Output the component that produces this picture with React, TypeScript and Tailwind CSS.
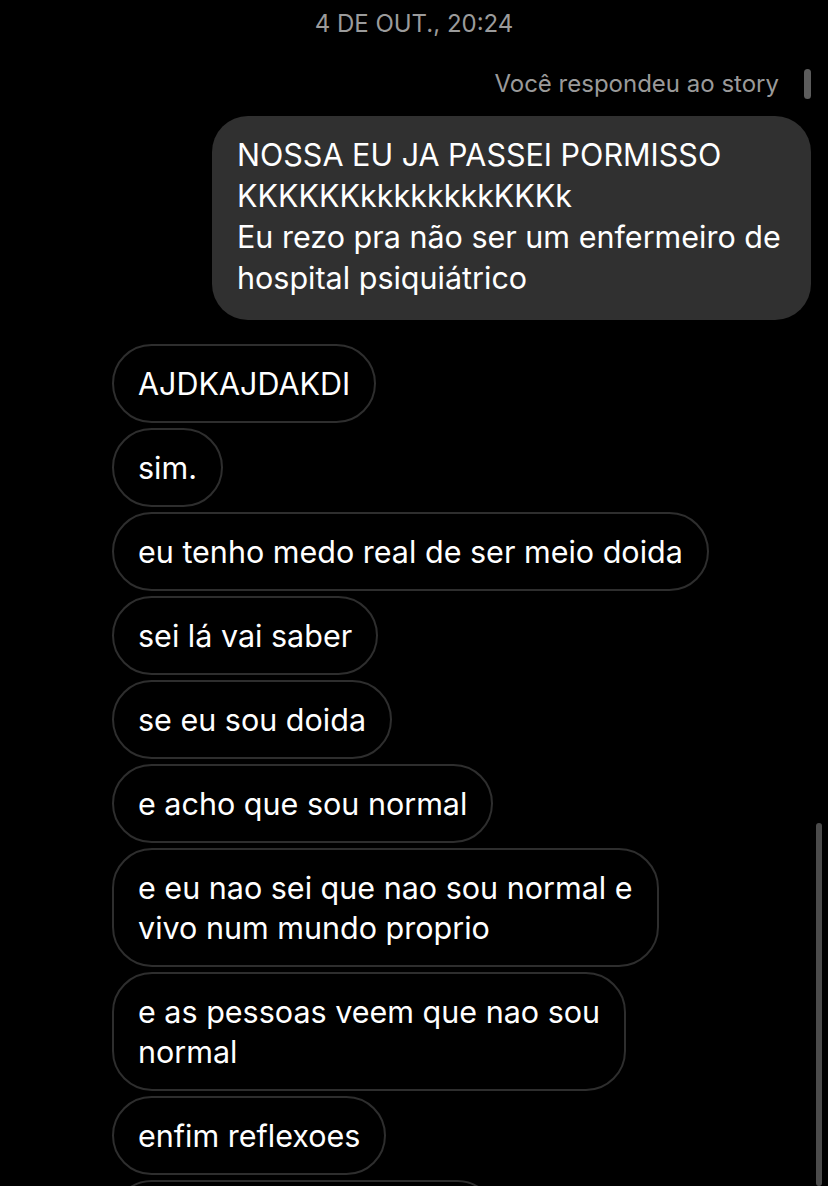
const received: string[][] = [
  ["AJDKAJDAKDI"],
  ["sim."],
  ["eu tenho medo real de ser meio doida"],
  ["sei lá vai saber"],
  ["se eu sou doida"],
  ["e acho que sou normal"],
  ["e eu nao sei que nao sou normal e", "vivo num mundo proprio"],
  ["e as pessoas veem que nao sou", "normal"],
  ["enfim reflexoes"],
];

const sentLines = [
  "NOSSA EU JA PASSEI PORMISSO",
  "KKKKKKkkkkkkkkKKKk",
  "Eu rezo pra não ser um enfermeiro de",
  "hospital psiquiátrico",
];

export default function App() {
  return (
    <div className="relative h-[1186px] w-full overflow-hidden bg-black font-['Inter','Noto_Sans',sans-serif] text-white">
      <div className="flex h-[48px] items-center justify-center text-[24px] text-[#9b9b9b]">
        4 DE OUT., 20:24
      </div>

      <div className="mt-[18px] flex h-[36px] items-center justify-end pr-[17px]">
        <span className="text-[24px] text-[#9a9a9a]">Você respondeu ao story</span>
        <div className="ml-[25px] h-[30px] w-[7px] rounded-full bg-[#5c5c5c]" />
      </div>

      <div className="mt-[14px] flex justify-end pr-[17px]">
        <div className="w-[599px] rounded-[36px] bg-[#303030] px-[25px] pt-[18px] pb-[22px] text-[30.5px] leading-[41px]">
          {sentLines.map((line) => (
            <div key={line} className="whitespace-nowrap">
              {line}
            </div>
          ))}
        </div>
      </div>

      <div className="mt-[24px] flex flex-col items-start gap-[5px] pl-[112px]">
        {received.map((lines, i) => (
          <div
            key={i}
            className="rounded-[40px] border-2 border-[#2e2e2e] px-[24px] py-[17.5px] text-[30.5px] leading-[40px]"
          >
            {lines.map((line) => (
              <div key={line} className="whitespace-nowrap">
                {line}
              </div>
            ))}
          </div>
        ))}
        {/* next bubble, only its top edge is on screen */}
        <div className="h-[79px] w-[385px] rounded-[40px] border-2 border-[#2e2e2e]" />
      </div>

      <div className="absolute right-[6px] top-[823px] bottom-0 w-[6px] rounded-full bg-[#4b4b4b]" />
    </div>
  );
}
